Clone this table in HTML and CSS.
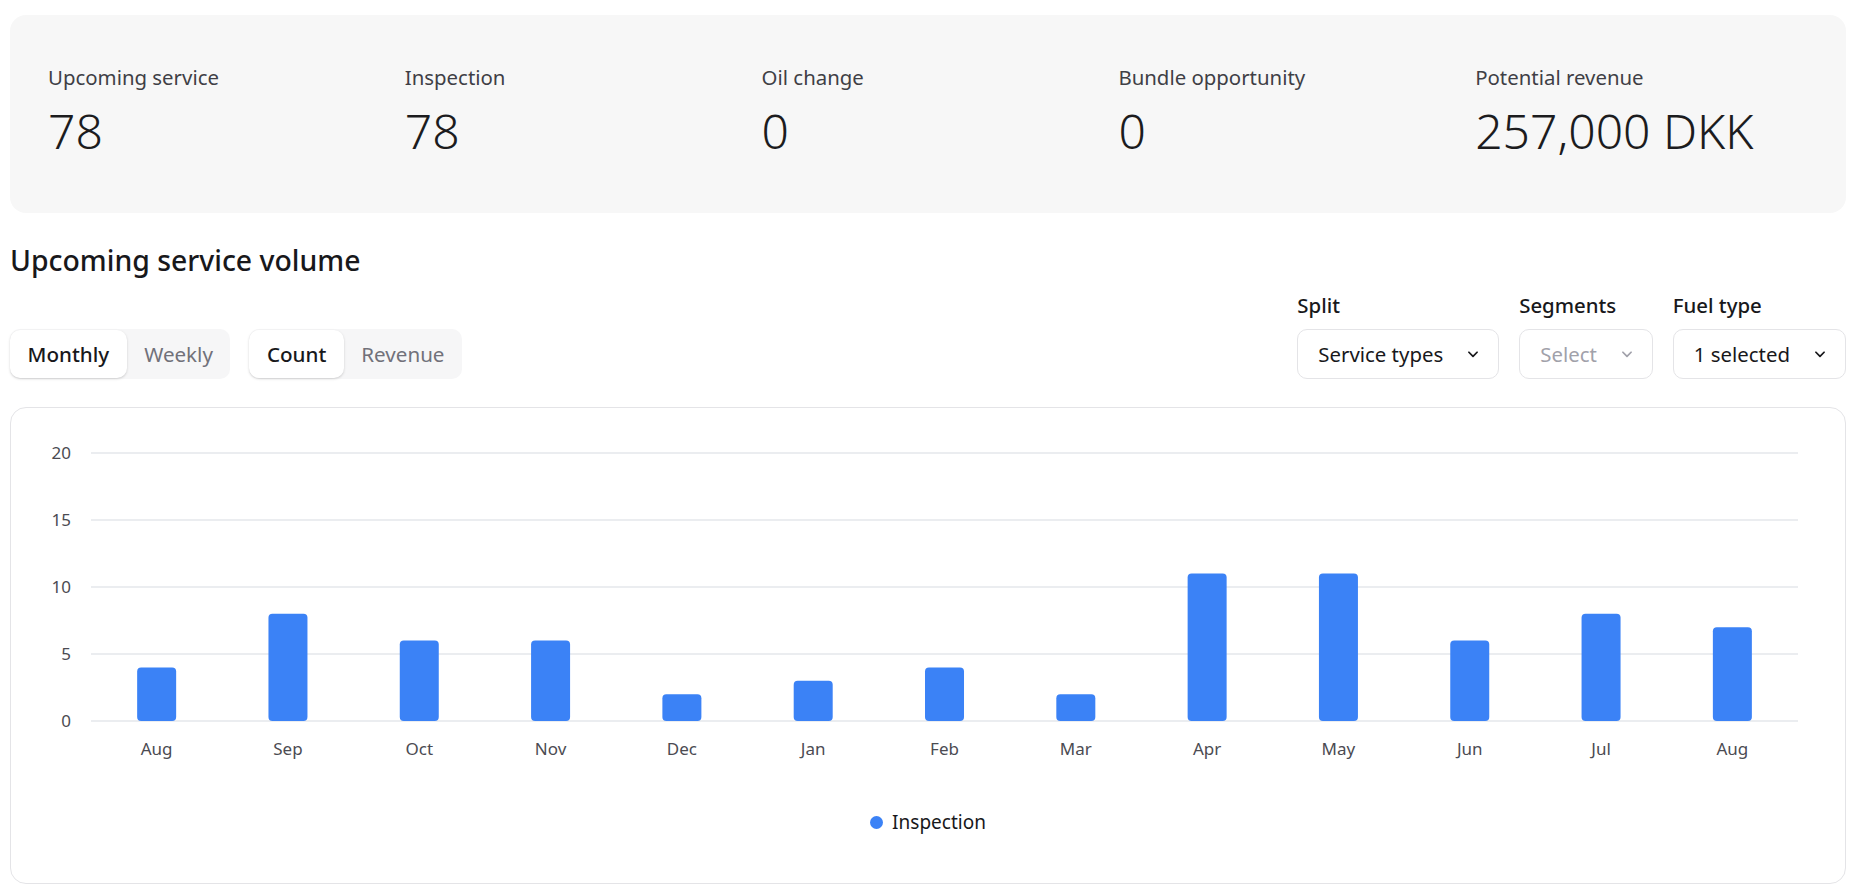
FILE: index.html
```html
<!DOCTYPE html>
<html lang="en">
<head>
<meta charset="utf-8">
<title>Upcoming service</title>
<link rel="stylesheet" href="styles.css">
</head>
<body>
<div class="page">
  <section class="stats">
    <div class="stat"><div class="stat-label">Upcoming service</div><div class="stat-value">78</div></div>
    <div class="stat"><div class="stat-label">Inspection</div><div class="stat-value">78</div></div>
    <div class="stat"><div class="stat-label">Oil change</div><div class="stat-value">0</div></div>
    <div class="stat"><div class="stat-label">Bundle opportunity</div><div class="stat-value">0</div></div>
    <div class="stat"><div class="stat-label">Potential revenue</div><div class="stat-value">257,000 DKK</div></div>
  </section>

  <h2 class="section-title">Upcoming service volume</h2>

  <div class="controls">
    <div class="toggles">
      <div class="seg">
        <span class="seg-btn active">Monthly</span>
        <span class="seg-btn">Weekly</span>
      </div>
      <div class="seg">
        <span class="seg-btn active">Count</span>
        <span class="seg-btn">Revenue</span>
      </div>
    </div>
    <div class="filters">
      <div class="filter">
        <div class="filter-label">Split</div>
        <div class="select"><span>Service types</span><svg class="chev" viewBox="0 0 12 12"><path d="M2.5 4.5 6 8l3.5-3.5"/></svg></div>
      </div>
      <div class="filter">
        <div class="filter-label">Segments</div>
        <div class="select placeholder"><span>Select</span><svg class="chev" viewBox="0 0 12 12"><path d="M2.5 4.5 6 8l3.5-3.5"/></svg></div>
      </div>
      <div class="filter">
        <div class="filter-label">Fuel type</div>
        <div class="select"><span>1 selected</span><svg class="chev" viewBox="0 0 12 12"><path d="M2.5 4.5 6 8l3.5-3.5"/></svg></div>
      </div>
    </div>
  </div>

  <section class="chart-card">
    <svg class="chart" viewBox="0 0 1834 360" width="1834" height="360">
      <g class="grid">
        <line x1="80" y1="45" x2="1787" y2="45"/>
        <line x1="80" y1="112" x2="1787" y2="112"/>
        <line x1="80" y1="179" x2="1787" y2="179"/>
        <line x1="80" y1="246" x2="1787" y2="246"/>
        <line x1="80" y1="313" x2="1787" y2="313"/>
      </g>
      <g class="ylabels">
        <text x="60" y="45" dy="0.36em">20</text>
        <text x="60" y="112" dy="0.36em">15</text>
        <text x="60" y="179" dy="0.36em">10</text>
        <text x="60" y="246" dy="0.36em">5</text>
        <text x="60" y="313" dy="0.36em">0</text>
      </g>
      <g class="bars">
        <rect x="126.15" y="259.4" width="39" height="53.6" rx="4"/>
        <rect x="257.46" y="205.8" width="39" height="107.2" rx="4"/>
        <rect x="388.77" y="232.6" width="39" height="80.4" rx="4"/>
        <rect x="520.08" y="232.6" width="39" height="80.4" rx="4"/>
        <rect x="651.39" y="286.2" width="39" height="26.8" rx="4"/>
        <rect x="782.7" y="272.8" width="39" height="40.2" rx="4"/>
        <rect x="914.01" y="259.4" width="39" height="53.6" rx="4"/>
        <rect x="1045.32" y="286.2" width="39" height="26.8" rx="4"/>
        <rect x="1176.63" y="165.6" width="39" height="147.4" rx="4"/>
        <rect x="1307.94" y="165.6" width="39" height="147.4" rx="4"/>
        <rect x="1439.25" y="232.6" width="39" height="80.4" rx="4"/>
        <rect x="1570.56" y="205.8" width="39" height="107.2" rx="4"/>
        <rect x="1701.87" y="219.2" width="39" height="93.8" rx="4"/>
      </g>
      <g class="xlabels">
        <text x="145.65" y="341" dy="0.36em">Aug</text>
        <text x="276.96" y="341" dy="0.36em">Sep</text>
        <text x="408.27" y="341" dy="0.36em">Oct</text>
        <text x="539.58" y="341" dy="0.36em">Nov</text>
        <text x="670.89" y="341" dy="0.36em">Dec</text>
        <text x="802.2" y="341" dy="0.36em">Jan</text>
        <text x="933.51" y="341" dy="0.36em">Feb</text>
        <text x="1064.82" y="341" dy="0.36em">Mar</text>
        <text x="1196.13" y="341" dy="0.36em">Apr</text>
        <text x="1327.44" y="341" dy="0.36em">May</text>
        <text x="1458.75" y="341" dy="0.36em">Jun</text>
        <text x="1590.06" y="341" dy="0.36em">Jul</text>
        <text x="1721.37" y="341" dy="0.36em">Aug</text>
      </g>
    </svg>
    <div class="legend">
      <span class="legend-dot"></span>
      <span class="legend-text">Inspection</span>
    </div>
  </section>
</div>
</body>
</html>
```

FILE: styles.css
```css
* {
  box-sizing: border-box;
}

html, body {
  margin: 0;
  background: #ffffff;
}

body {
  font-family: "Noto Sans", "Open Sans", sans-serif;
  color: #1c1c1e;
}

.page {
  padding: 15px 10px 0 10px;
}

.stats {
  display: grid;
  grid-template-columns: repeat(5, 1fr);
  column-gap: 24px;
  background: #f7f7f7;
  border-radius: 16px;
  padding: 48px 38px 54px 38px;
}

.stat-label {
  font-size: 20.4px;
  line-height: 28px;
  color: #3f3f46;
}

.stat-value {
  margin-top: 12px;
  font-size: 48px;
  line-height: 56px;
  font-weight: 300;
  color: #1c1c1e;
}

.section-title {
  margin: 29px 0 0 0;
  font-size: 28.4px;
  line-height: 36px;
  font-weight: 500;
  color: #18181b;
}

.controls {
  margin-top: 13px;
  display: flex;
  justify-content: space-between;
  align-items: flex-end;
}

.toggles {
  display: flex;
  gap: 19px;
}

.seg {
  display: flex;
  height: 50px;
  background: #f6f6f7;
  border-radius: 10px;
  padding: 1px 0;
}

.seg-btn {
  display: flex;
  align-items: center;
  padding: 0 17.5px;
  font-size: 20.6px;
  color: #71717a;
  border-radius: 10px;
}

.seg-btn.active {
  background: #ffffff;
  color: #18181b;
  font-weight: 500;
  box-shadow: 0 1px 3px rgba(0, 0, 0, 0.12), 0 1px 2px rgba(0, 0, 0, 0.06);
}

.filters {
  display: flex;
  gap: 20px;
}

.filter-label {
  font-size: 20.4px;
  line-height: 28px;
  font-weight: 500;
  color: #18181b;
  margin-bottom: 10px;
}

.select {
  display: flex;
  align-items: center;
  gap: 23px;
  height: 50px;
  padding: 0 18px 0 20px;
  border: 1px solid #e4e4e7;
  border-radius: 10px;
  font-size: 20.4px;
  color: #18181b;
  background: #ffffff;
}

.select.placeholder {
  color: #a1a1aa;
}

.chev {
  width: 14px;
  height: 14px;
  fill: none;
  stroke: currentColor;
  stroke-width: 1.5;
  stroke-linecap: round;
  stroke-linejoin: round;
}

.chart-card {
  margin-top: 28px;
  border: 1px solid #e4e4e7;
  border-radius: 16px;
  padding-bottom: 48px;
}

.chart {
  display: block;
}

.grid line {
  stroke: #e5e7eb;
  stroke-width: 1.5;
}

.bars rect {
  fill: #3b82f6;
}

.ylabels text {
  font-family: "Noto Sans", "Open Sans", sans-serif;
  font-size: 17px;
  fill: #4b4b52;
  text-anchor: end;
}

.xlabels text {
  font-family: "Noto Sans", "Open Sans", sans-serif;
  font-size: 17px;
  fill: #4b4b52;
  text-anchor: middle;
}

.legend {
  margin-top: 41px;
  display: flex;
  justify-content: center;
  align-items: center;
  gap: 9px;
  height: 26px;
}

.legend-dot {
  width: 13px;
  height: 13px;
  border-radius: 50%;
  background: #3b82f6;
}

.legend-text {
  font-size: 19px;
  color: #18181b;
}
```
